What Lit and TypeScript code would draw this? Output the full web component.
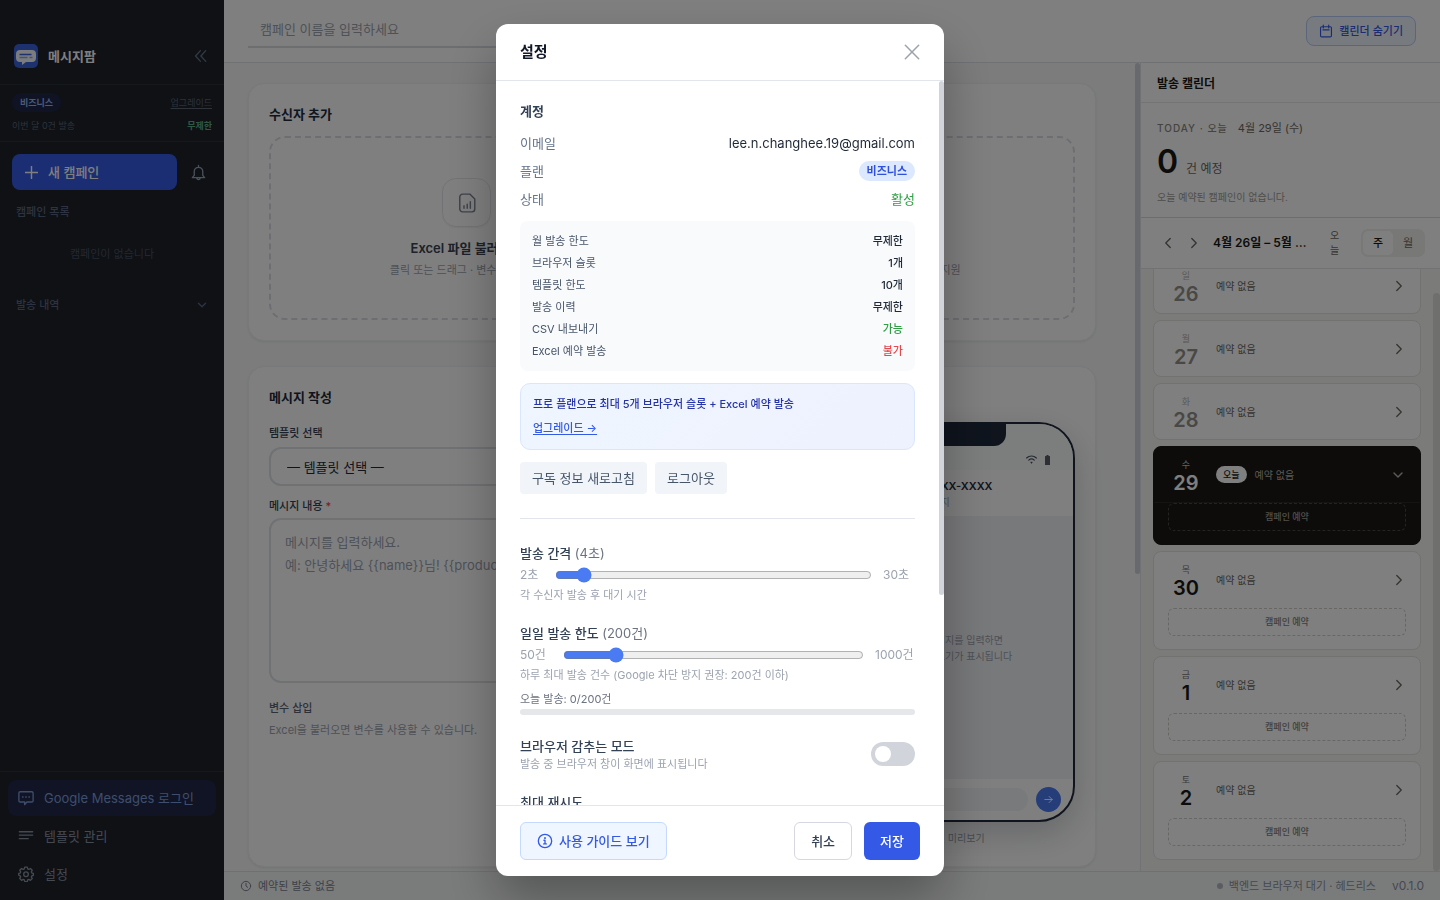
import { LitElement, html, svg, css, nothing } from "lit";
import { customElement, state } from "lit/decorators.js";
import { classMap } from "lit/directives/class-map.js";

const paths = {
  collapse: svg`<path d="M9.500 3 4 9l5.500 6M15.500 3 10 9l5.500 6"/>`,
  plus: svg`<path d="M9 0.500v17M0.500 9h17"/>`,
  bell: svg`<path d="M4.500 12V8a4.500 4.500 0 0 1 9 0v4l2 2.500h-13zM7 14.500c.4 1.400 1.100 2 2 2s1.600-.6 2-2M9 1.500v2"/>`,
  down: svg`<path d="m5 7 4 4 4-4"/>`,
  right: svg`<path d="m6.500 4 5 5-5 5"/>`,
  left: svg`<path d="m11.500 4-5 5 5 5"/>`,
  chat: svg`<path d="M2.500 2h13A1.500 1.500 0 0 1 17 3.500v8.500a1.500 1.500 0 0 1-1.500 1.500H10L7.500 16.500v-3h-5A1.500 1.500 0 0 1 1 12V3.500A1.500 1.500 0 0 1 2.500 2z"/><path d="M5.200 7.800h.4M8.800 7.800h.4M12.400 7.800h.4" stroke-width="1.800"/>`,
  lines: svg`<path d="M1.500 4.200h15M1.500 8h15M1.500 12h10"/>`,
  gear: svg`<path d="M7.600 1.200h2.800l.5 2 1.300.6 1.800-1 2 2-1 1.800.6 1.300 1.800.5v2l-1.800.6-.6 1.300 1 1.900-2 1.900-1.800-1-1.300.6-.5 1.900H7.600l-.5-1.900-1.300-.6-1.800 1-2-1.900 1-1.900-.6-1.300L.8 10.400v-2l1.600-.5.6-1.300-1-1.800 2-2 1.800 1 1.300-.6z"/><circle cx="9" cy="9.300" r="2.600"/>`,
  file: svg`<path d="M5 1h6.500L16 5.500V14.500a2.500 2.500 0 0 1-2.500 2.500H5a2.500 2.500 0 0 1-2.500-2.500V3.500A2.500 2.500 0 0 1 5 1zM6.300 11.500v2.300M9.200 10.200v3.600M12 7.800v6"/>`,
  pen: svg`<path d="m3 15 1-4 8-8 3 3-8 8zM10 5l3 3"/>`,
  calendar: svg`<path d="M3.500 3.500h11A1.500 1.500 0 0 1 16 5v10a1.500 1.500 0 0 1-1.500 1.500h-11A1.500 1.500 0 0 1 2 15V5a1.500 1.500 0 0 1 1.500-1.500zM5.500 1.500v3.500M12.500 1.500v3.500M5 7.500h8"/>`,
  clock: svg`<circle cx="9" cy="9" r="7"/><path d="M9 5v4l2.500 2"/>`,
  close: svg`<path d="M1.500 1.500l15 15M16.500 1.500l-15 15"/>`,
  info: svg`<circle cx="9" cy="9" r="7.500"/><path d="M7.800 8.200H9v4M7.500 12.300h3"/><path d="M9 5.500v.3" stroke-width="2"/>`,
  arrow: svg`<path d="M3 9h12M10 4l5 5-5 5"/>`,
  wifi: svg`<path d="M1 6.500a11.500 11.500 0 0 1 16 0M4.500 10a7 7 0 0 1 9 0"/><path d="M8.200 13.500h1.600l-.8 1.200z" stroke-width="2"/>`,
};

const icon = (name: keyof typeof paths, size = 16, width = 1.5) => html`<svg
  width=${size} height=${size} viewBox="0 0 18 18" fill="none" stroke="currentColor"
  stroke-width=${width} stroke-linecap="round" stroke-linejoin="round" aria-hidden="true"
>${paths[name]}</svg>`;

const limits = [
  ["월 발송 한도", "무제한", ""],
  ["브라우저 슬롯", "1개", ""],
  ["템플릿 한도", "10개", ""],
  ["발송 이력", "무제한", ""],
  ["CSV 내보내기", "가능", "ok"],
  ["Excel 예약 발송", "불가", "no"],
];

const days = [
  { name: "일", date: 26, kind: "past" },
  { name: "월", date: 27, kind: "past" },
  { name: "화", date: 28, kind: "past" },
  { name: "수", date: 29, kind: "today" },
  { name: "목", date: 30, kind: "next" },
  { name: "금", date: 1, kind: "next" },
  { name: "토", date: 2, kind: "next" },
];

const base = css`
  * { box-sizing: border-box; }
  h1, h2, h3, p, dl, dd, ul { margin: 0; padding: 0; font-size: inherit; font-weight: inherit; }
  button, input, select, textarea { font: inherit; color: inherit; margin: 0; }
  button { padding: 0; border: 0; background: none; cursor: pointer; }
  svg { flex: none; display: block; }
`;

@customElement("side-bar")
class SideBar extends LitElement {
  static styles = [base, css`
    :host { display: flex; flex-direction: column; background: #1e222b; color: #94a3b8; font-size: 13px; line-height: 20px; }
    .brand { display: flex; align-items: center; gap: 10px; height: 85px; padding: 28px 16px 0 14px; border-bottom: 1px solid #2b303b; color: #fff; font-weight: 700; }
    .brand h1 { flex: 1; font-weight: 700; }
    .brand button { color: #64748b; }
    .plan { display: grid; gap: 4px; height: 57px; padding: 8px 12px 6px; border-bottom: 1px solid #2b303b; font-size: 9px; line-height: 19px; color: #5b6577; }
    .row { display: flex; align-items: center; justify-content: space-between; }
    .tag { padding: 0 8px; border-radius: 10px; background: #1f2748; color: #93b4f5; font-weight: 600; }
    .plan a { color: #5b6577; text-underline-offset: 2px; }
    .free { color: #5fae86; font-weight: 600; }
    .actions { display: flex; align-items: center; gap: 13px; padding: 12px; color: #94a3b8; }
    .new { flex: 1; display: flex; align-items: center; gap: 10px; height: 36px; padding: 0 13px; border-radius: 8px; background: #365ce6; color: #fff; font-weight: 500; }
    .bell { padding: 0 5px 0 0; }
    .label { display: flex; align-items: center; justify-content: space-between; padding: 0 14px 0 16px; font-size: 11px; font-weight: 500; color: #5a6780; }
    .none { padding: 22px 0 31px; text-align: center; font-size: 11px; color: #465062; }
    nav { display: grid; gap: 2px; margin-top: auto; padding: 8px; border-top: 1px solid #2b303b; }
    nav a { display: flex; align-items: center; gap: 10px; height: 36px; padding: 0 10px; border-radius: 8px; color: #8a93a3; text-decoration: none; }
    nav .on { background: #202848; color: #7c9cd8; }
  `];
  render() {
    return html`
      <header class="brand">
        <svg width="24" height="24" viewBox="0 0 24 24" aria-hidden="true">
          <rect width="24" height="24" rx="5" fill="#3a62dc"/>
          <path d="M6 6h12a4 4 0 0 1 4 4v4a4 4 0 0 1-4 4h-6l-4 3v-3H6a4 4 0 0 1-4-4v-4a4 4 0 0 1 4-4z" fill="#f6f8fc"/>
          <path d="M5.500 10.500h12" stroke="#3a62dc" stroke-width="1.500"/>
          <path d="M5.500 13.500h8M15.500 13.500h3" stroke="#8ba6ea" stroke-width="1.500"/>
        </svg>
        <h1>메시지팜</h1>
        <button aria-label="사이드바 접기">${icon("collapse", 16, 1.5)}</button>
      </header>
      <section class="plan">
        <div class="row"><span class="tag">비즈니스</span><a href="#">업그레이드</a></div>
        <div class="row"><span>이번 달 0건 발송</span><span class="free">무제한</span></div>
      </section>
      <div class="actions">
        <button class="new">${icon("plus", 13, 2)}새 캠페인</button>
        <button class="bell" aria-label="알림">${icon("bell", 17, 1.4)}</button>
      </div>
      <h2 class="label">캠페인 목록</h2>
      <p class="none">캠페인이 없습니다</p>
      <h2 class="label">발송 내역 ${icon("down", 16)}</h2>
      <nav>
        <a class="on" href="#">${icon("chat")}<span>Google Messages 로그인</span></a>
        <a href="#">${icon("lines")}<span>템플릿 관리</span></a>
        <a href="#">${icon("gear")}<span>설정</span></a>
      </nav>`;
  }
}

@customElement("campaign-form")
class CampaignForm extends LitElement {
  static styles = [base, css`
    :host { display: flex; min-width: 0; min-height: 0; background: #f8f9fa; font-size: 13px; line-height: 20px; color: #334155; }
    .scroll { flex: 1; min-width: 0; overflow: hidden; display: flex; flex-direction: column; gap: 25px; padding: 20px 39px 0 24px; }
    .bar { width: 5px; }
    .thumb { height: 511px; border-radius: 3px; background: #cfd3dd; }
    .card { flex: none; padding: 20px; border: 1px solid #f1f2f5; border-radius: 16px; background: #fff; box-shadow: 0 1px 3px rgba(0, 0, 0, 0.08); }
    h2 { font-weight: 700; color: #1e293b; }
    .drops { display: grid; grid-template-columns: 1fr 1fr; gap: 16px; margin-top: 12px; }
    .drop { display: flex; flex-direction: column; align-items: center; height: 184px; padding-top: 40px; border: 2px dashed #d9dce2; border-radius: 16px; }
    .pic { display: grid; place-items: center; width: 49px; height: 49px; margin-bottom: 11px; border: 1px solid #e5e7eb; border-radius: 14px; color: #7c8494; box-shadow: 0 1px 2px rgba(0, 0, 0, 0.06); }
    .drop b { font-weight: 600; color: #3b4252; }
    .small { font-size: 11px; color: #9ca3af; font-weight: 400; line-height: 24px; }
    .cols { display: flex; gap: 24px; margin-top: 15px; }
    .fields { flex: 1; display: flex; flex-direction: column; padding-top: 1px; }
    label, .sub { font-size: 11px; font-weight: 500; line-height: 20px; }
    .sub { margin-top: 15px; color: #5b6474; }
    label i { color: #ef4444; font-style: normal; }
    select { appearance: none; height: 39px; margin: 4px 0 10px; padding: 0 16px; border: 2px solid #dfe2e7; border-radius: 12px; background: #fff; color: #1f2937; }
    textarea { display: block; resize: none; height: 165px; margin-top: 2px; padding: 11px 14px; border: 2px solid #dfe2e7; border-radius: 12px; background: #fff; line-height: 23px; }
    textarea::placeholder { color: #9ca3af; }
    .side { width: 260px; text-align: center; }
    .phone { position: relative; display: flex; flex-direction: column; height: 400px; border: 2px solid #1e293b; border-radius: 36px; overflow: hidden; box-shadow: 0 12px 32px rgba(15, 23, 42, 0.2); }
    .notch { position: absolute; top: 0; left: 69px; width: 120px; height: 22px; border-radius: 0 0 12px 12px; background: #1e293b; }
    .status { display: flex; justify-content: flex-end; align-items: flex-end; gap: 8px; height: 46px; padding: 0 23px 5px; background: #f8fafa; color: #4b5563; }
    .to { height: 46px; padding: 6px 0 0 84px; text-align: left; line-height: 20px; }
    .to b { display: block; font-size: 11px; font-weight: 600; color: #1e293b; }
    .to span, .body, .cap { font-size: 10px; line-height: 16px; color: #9ca3af; }
    .to span { display: block; line-height: 12px; }
    .body { flex: 1; display: grid; place-content: center; background: #f1f2f6; }
    .send { display: flex; align-items: center; gap: 8px; padding: 8px 12px; }
    .send span { flex: 1; height: 23px; border-radius: 12px; background: #f3f4f6; }
    .send button { display: grid; place-items: center; width: 25px; height: 25px; border-radius: 13px; background: #4a7bf2; color: #fff; }
    .cap { margin-top: 8px; }
  `];
  render() {
    return html`
      <div class="scroll">
        <section class="card">
          <h2>수신자 추가</h2>
          <div class="drops">
            <button class="drop"><span class="pic">${icon("file", 20, 1.3)}</span><b>Excel 파일 불러오기</b><span class="small">클릭 또는 드래그 · 변수 자동 매핑</span></button>
            <button class="drop"><span class="pic">${icon("pen", 20, 1.3)}</span><b>직접 입력</b><span class="small">번호를 직접 입력 · 여러 명 입력 지원</span></button>
          </div>
        </section>
        <section class="card">
          <h2>메시지 작성</h2>
          <div class="cols">
            <div class="fields">
              <label for="tpl">템플릿 선택</label>
              <select id="tpl"><option>— 템플릿 선택 —</option></select>
              <label for="msg">메시지 내용 <i>*</i></label>
              <textarea id="msg" placeholder=${"메시지를 입력하세요.\n예: 안녕하세요 {{name}}님! {{product}} 안내드립니다."}></textarea>
              <h3 class="sub">변수 삽입</h3>
              <p class="small">Excel을 불러오면 변수를 사용할 수 있습니다.</p>
            </div>
            <div class="side">
              <div class="phone">
                <div class="notch"></div>
                <div class="status">
                  ${icon("wifi", 11, 2)}
                  <svg width="5" height="10" viewBox="0 0 5 10" fill="#5b5f6b" aria-hidden="true"><path d="M1.500 0h2v1h1A.5.5 0 0 1 5 1.500v8a.5.5 0 0 1-.5.5h-4a.5.5 0 0 1-.5-.5v-8A.5.5 0 0 1 .5 1h1z"/></svg>
                </div>
                <div class="to"><b>010-XXXX-XXXX</b><span>문자 메시지</span></div>
                <div class="body"><p>왼쪽에서 메시지를 입력하면</p><p>여기에서 미리보기가 표시됩니다</p></div>
                <div class="send"><span></span><button aria-label="보내기">${icon("arrow", 11)}</button></div>
              </div>
              <p class="cap">수신 화면 미리보기</p>
            </div>
          </div>
        </section>
      </div>
      <div class="bar"><div class="thumb"></div></div>`;
  }
}

@customElement("send-calendar")
class SendCalendar extends LitElement {
  static styles = [base, css`
    :host { display: flex; flex-direction: column; min-height: 0; border-left: 1px solid #e2e4e8; background: #fff; font-size: 12px; line-height: 20px; color: #1a1814; }
    h2 { height: 40px; padding: 11px 16px 9px; border-bottom: 1px solid #e7e8ea; font-weight: 700; }
    .today { height: 115px; padding: 15px 16px 0; border-bottom: 1px solid #d9dadd; color: #6b6860; }
    .when { display: flex; gap: 10px; font-size: 10px; }
    .when b { font-weight: 500; letter-spacing: 1px; color: #8b8880; }
    .when span { font-size: 11px; }
    .count { display: flex; align-items: baseline; gap: 8px; margin-top: 8px; line-height: 32px; }
    .count b { font-size: 32px; font-weight: 600; color: #1a1814; }
    .note { margin-top: 2px; font-size: 10px; color: #a09d96; }
    .tools { display: flex; align-items: center; height: 51px; padding: 0 15px 0 18px; border-bottom: 1px solid #e2e4e8; color: #6b6860; }
    .tools > button { display: grid; place-items: center; width: 18px; height: 26px; }
    .tools .nx { margin-left: 8px; }
    .tools b { flex: 1; min-width: 0; margin-left: 10px; overflow: hidden; white-space: nowrap; text-overflow: ellipsis; font-weight: 600; color: #1a1814; }
    .tools .now { width: 11px; height: 32px; margin: 0 21px 0 18px; font-size: 10px; line-height: 15px; }
    .seg { display: flex; padding: 2px; border-radius: 7px; background: #f0f0ef; font-size: 11px; }
    .seg button { width: 30px; height: 24px; border-radius: 5px; }
    .seg .on { background: #fff; color: #1a1814; font-weight: 500; }
    .wrap { flex: 1; min-height: 0; display: flex; background: #f7f6f2; }
    .list { flex: 1; display: flex; flex-direction: column; gap: 6px; padding: 12px 12px 11px; overflow: hidden; list-style: none; }
    .bar { display: flex; flex-direction: column; width: 7px; padding-top: 24px; }
    .thumb { flex: 1; border-radius: 4px; background: #dfdedb; }
    .day { flex: none; border: 1px solid #e4e4e2; border-radius: 8px; background: #fff; color: #6b6860; }
    .head { display: flex; align-items: center; gap: 12px; width: 100%; height: 55px; padding: 0 13px 0 14px; font-size: 10px; text-align: left; }
    .num { display: grid; width: 36px; padding-top: 2px; text-align: center; font-size: 9px; line-height: 14px; color: #77746d; }
    .num b { font-size: 20px; line-height: 22px; font-weight: 600; color: #1a1814; }
    .past .num { color: #b5b2ab; }
    .past .num b { color: #94918a; }
    .txt { flex: 1; display: flex; align-items: center; gap: 8px; }
    .pill { padding: 0 7px; border-radius: 9px; background: #fff; color: #1a1814; font-size: 9px; font-weight: 500; line-height: 17px; }
    .foot { padding: 1px 14px 13px; }
    .foot button { width: 100%; height: 28px; border: 1px dashed #d0cfcb; border-radius: 6px; font-size: 9px; font-weight: 500; color: #85827b; }
    .day.today-card { background: #1a1814; border-color: #1a1814; color: #b5b2ab; }
    .today-card .foot { border-top: 1px solid #2c2924; padding: 0 14px 13px; }
    .today-card .foot button { border-color: #4a4741; color: #a09d96; }
    .today-card .num { color: #c8c6c0; }
    .today-card .num b { color: #fff; }
  `];
  firstUpdated() {
    const list = this.renderRoot.querySelector(".list") as HTMLElement;
    const toEnd = () => { list.scrollTop = list.scrollHeight; };
    toEnd();
    requestAnimationFrame(toEnd);
  }
  render() {
    return html`
      <h2>발송 캘린더</h2>
      <section class="today">
        <p class="when"><b>TODAY · 오늘</b><span>4월 29일 (수)</span></p>
        <p class="count"><b>0</b><span>건 예정</span></p>
        <p class="note">오늘 예약된 캠페인이 없습니다.</p>
      </section>
      <div class="tools">
        <button aria-label="이전 주">${icon("left", 16)}</button>
        <button class="nx" aria-label="다음 주">${icon("right", 16)}</button>
        <b>4월 26일 – 5월 2일</b>
        <button class="now">오늘</button>
        <div class="seg"><button class="on">주</button><button>월</button></div>
      </div>
      <div class="wrap">
        <ul class="list">
          ${days.map((d) => {
            const today = d.kind === "today";
            return html`<li class=${classMap({ day: true, past: d.kind === "past", "today-card": today })}>
              <button class="head">
                <span class="num">${d.name}<b>${d.date}</b></span>
                <span class="txt">${today ? html`<span class="pill">오늘</span>` : nothing}예약 없음</span>
                ${icon(today ? "down" : "right", today ? 18 : 16)}
              </button>
              ${d.kind === "past" ? nothing : html`<div class="foot"><button>캠페인 예약</button></div>`}
            </li>`;
          })}
        </ul>
        <div class="bar"><div class="thumb"></div></div>
      </div>`;
  }
}

@customElement("settings-dialog")
class SettingsDialog extends LitElement {
  @state() private gap = 4;
  @state() private cap = 200;
  static styles = [base, css`
    :host { display: flex; flex-direction: column; width: 448px; max-width: 100%; border-radius: 12px; overflow: hidden; background: #fff; color: #334155; font-size: 13px; line-height: 20px; box-shadow: 0 25px 50px rgba(0, 0, 0, 0.3); }
    header { display: flex; align-items: center; justify-content: space-between; height: 57px; padding: 0 24px; border-bottom: 1px solid #e2e5ec; font-size: 15px; color: #111827; }
    header h2 { font-weight: 700; }
    header button { color: #9ca3af; }
    .wrap { flex: 1; min-height: 0; display: flex; }
    .body { flex: 1; min-width: 0; overflow: hidden; padding: 20px 24px; }
    .bar { width: 5px; }
    .thumb { height: 514px; border-radius: 3px; background: #d1d5db; }
    h3 { font-weight: 700; margin-bottom: 8px; }
    dl > div { display: flex; align-items: center; justify-content: space-between; }
    .info { line-height: 28px; color: #64748b; }
    .mail { color: #1f2937; }
    .tag { padding: 0 8px; border-radius: 10px; background: #dbe8fe; color: #2f50dd; font-size: 11px; font-weight: 600; line-height: 20px; }
    .info .ok { color: #2f9e44; }
    .limits { margin-top: 8px; padding: 9px 12px; border-radius: 8px; background: #f8fafc; font-size: 11px; line-height: 22px; color: #475569; }
    .limits dd { font-weight: 500; color: #1f2937; }
    .limits .ok { color: #2f9e44; }
    .limits .no { color: #e5484d; }
    .promo { display: grid; justify-items: start; gap: 4px; margin-top: 12px; padding: 10px 12px 11px; border: 1px solid #d9e6fd; border-radius: 10px; background: linear-gradient(135deg, #eff6ff, #eef1fe); font-size: 11px; font-weight: 500; color: #2433a8; }
    .promo a { color: #3459e6; text-underline-offset: 2px; }
    .acts { display: flex; gap: 8px; margin: 12px 0 24px; padding-bottom: 24px; border-bottom: 1px solid #e2e5ec; }
    .acts button { height: 32px; padding: 0 12px; border-radius: 4px; background: #f1f5f9; color: #475569; }
    .field { margin-bottom: 20px; }
    .title { display: block; font-weight: 500; }
    .title span { font-weight: 400; color: #6b7280; }
    .range { display: flex; align-items: center; gap: 12px; height: 16px; margin: 4px 0; font-size: 12px; color: #9ca3af; white-space: nowrap; }
    .range input { flex: 1; min-width: 0; height: 16px; margin: 0 -1px; accent-color: #4a7bf2; }
    .w24 { width: 24px; }
    .w32 { width: 32px; }
    .w40 { width: 40px; }
    .hint { font-size: 11px; line-height: 16px; color: #9ca3af; }
    .used { margin-top: 8px; font-size: 11px; line-height: 16px; color: #6b7280; }
    .meter { height: 6px; margin-top: 2px; border-radius: 3px; background: #e5e7eb; }
    .switch { display: flex; align-items: center; justify-content: space-between; margin-top: 21px; }
    .switch input { appearance: none; width: 44px; height: 24px; border-radius: 12px; background: #d1d5db; }
    .switch input::before { content: ""; display: block; width: 16px; height: 16px; margin: 4px; border-radius: 8px; background: #fff; }
    footer { display: flex; gap: 12px; padding: 16px 24px; border-top: 1px solid #e2e5ec; }
    footer button { display: flex; align-items: center; gap: 6px; height: 38px; padding: 0 16px; border: 1px solid #d5d8e0; border-radius: 6px; font-weight: 500; }
    footer .guide { margin-right: auto; border-color: #c3d9fd; background: #eff6ff; color: #3459e6; }
    footer .save { border: 0; background: #3459e6; color: #fff; }
  `];
  render() {
    return html`
      <header><h2>설정</h2><button aria-label="닫기">${icon("close", 16, 1.7)}</button></header>
      <div class="wrap">
        <div class="body">
          <h3>계정</h3>
          <dl class="info">
            <div><dt>이메일</dt><dd class="mail">lee.n.changhee.19@gmail.com</dd></div>
            <div><dt>플랜</dt><dd class="tag">비즈니스</dd></div>
            <div><dt>상태</dt><dd class="ok">활성</dd></div>
          </dl>
          <dl class="limits">
            ${limits.map(([k, v, c]) => html`<div><dt>${k}</dt><dd class=${c}>${v}</dd></div>`)}
          </dl>
          <section class="promo">
            <p>프로 플랜으로 최대 5개 브라우저 슬롯 + Excel 예약 발송</p>
            <a href="#">업그레이드 →</a>
          </section>
          <div class="acts"><button>구독 정보 새로고침</button><button>로그아웃</button></div>
          <div class="field">
            <label class="title" for="gap">발송 간격 <span>(${this.gap}초)</span></label>
            <div class="range">
              <span class="w24">2초</span>
              <input id="gap" type="range" min="2" max="30" .value=${String(this.gap)} @input=${(e: Event) => (this.gap = +(e.target as HTMLInputElement).value)}>
              <span class="w32">30초</span>
            </div>
            <p class="hint">각 수신자 발송 후 대기 시간</p>
          </div>
          <div class="field">
            <label class="title" for="cap">일일 발송 한도 <span>(${this.cap}건)</span></label>
            <div class="range">
              <span class="w32">50건</span>
              <input id="cap" type="range" min="50" max="1000" step="10" .value=${String(this.cap)} @input=${(e: Event) => (this.cap = +(e.target as HTMLInputElement).value)}>
              <span class="w40">1000건</span>
            </div>
            <p class="hint">하루 최대 발송 건수 (Google 차단 방지 권장: 200건 이하)</p>
            <p class="used">오늘 발송: 0/${this.cap}건</p>
            <div class="meter"></div>
          </div>
          <div class="field switch">
            <div><label class="title" for="hide">브라우저 감추는 모드</label><p class="hint">발송 중 브라우저 창이 화면에 표시됩니다</p></div>
            <input id="hide" type="checkbox" role="switch">
          </div>
          <label class="title" for="retry">최대 재시도</label>
          <input id="retry" type="number" value="3">
        </div>
        <div class="bar"><div class="thumb"></div></div>
      </div>
      <footer>
        <button class="guide">${icon("info", 16)}사용 가이드 보기</button>
        <button>취소</button>
        <button class="save">저장</button>
      </footer>`;
  }
}

@customElement("app-root")
class AppRoot extends LitElement {
  static styles = [base, css`
    :host { display: block; height: 100vh; font-family: Inter, "Noto Sans CJK KR", sans-serif; font-size: 13px; line-height: 20px; }
    .app { display: grid; grid-template-columns: 224px 1fr; height: 100%; }
    .main { display: grid; grid-template-columns: minmax(0, 1fr) 300px; grid-template-rows: 63px minmax(0, 1fr) 29px; min-width: 0; height: 100vh; }
    .top { grid-column: 1 / 3; display: flex; align-items: flex-start; justify-content: space-between; padding: 14px 24px 0; border-bottom: 1px solid #e0e2e7; background: #fff; }
    .top input { width: 448px; height: 34px; padding: 0 12px 2px; border: 0; border-bottom: 2px solid #d9dce1; background: none; }
    .top input::placeholder { color: #9ca3af; }
    .top button { display: flex; align-items: center; gap: 6px; height: 30px; margin-top: 2px; padding: 0 12px; border: 1px solid #b7ccf8; border-radius: 8px; background: #eff6ff; font-size: 11px; font-weight: 500; color: #3459e6; }
    .bottom { grid-column: 1 / 3; display: flex; align-items: center; gap: 6px; padding: 0 16px; border-top: 1px solid #dfe3e2; background: #f5f8f7; font-size: 11px; color: #7b8291; }
    .dot { width: 6px; height: 6px; border-radius: 3px; background: #b4b9c4; margin-left: auto; }
    .end { color: #8b92a3; }
    .ver { margin-left: 10px; font-size: 12px; color: #8b92a3; }
    .shade { position: fixed; inset: 0; display: flex; justify-content: center; padding: 24px; background: rgba(0, 0, 0, 0.5); }
  `];
  render() {
    return html`
      <div class="app">
        <side-bar></side-bar>
        <main class="main">
          <header class="top">
            <input aria-label="캠페인 이름" placeholder="캠페인 이름을 입력하세요">
            <button>${icon("calendar", 14)}캘린더 숨기기</button>
          </header>
          <campaign-form></campaign-form>
          <send-calendar></send-calendar>
          <footer class="bottom">
            ${icon("clock", 12)}<span>예약된 발송 없음</span>
            <span class="dot"></span><span class="end">백엔드 브라우저 대기 · 헤드리스</span><span class="ver">v0.1.0</span>
          </footer>
        </main>
      </div>
      <div class="shade"><settings-dialog role="dialog" aria-modal="true" aria-label="설정"></settings-dialog></div>`;
  }
}
